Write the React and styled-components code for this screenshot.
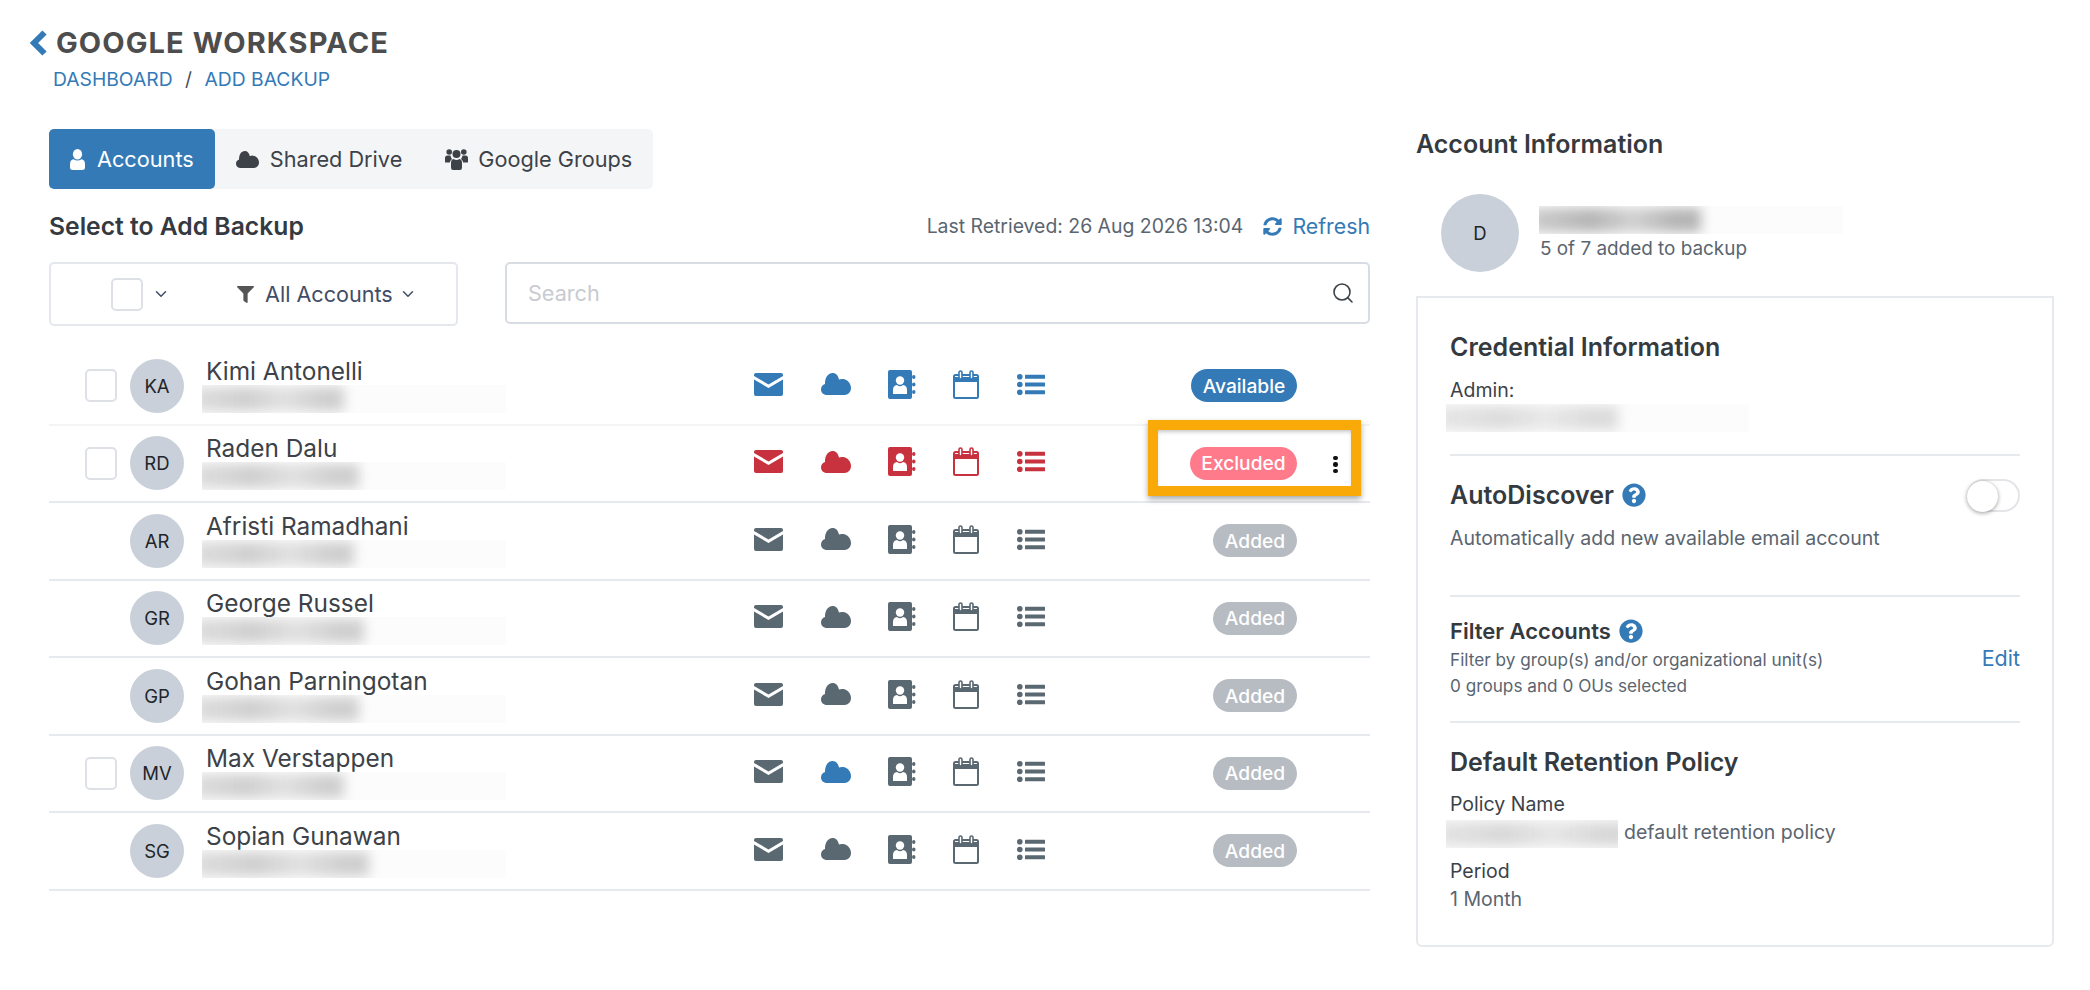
import React from "react";
import styled, { createGlobalStyle } from "styled-components";
import { FaFilter, FaQuestionCircle, FaSyncAlt } from "react-icons/fa";
import { ChevronDown, Search } from "lucide-react";

const BLUE = "#337ab7";
const RED = "#c8323e";
const GREY = "#5a6872";

const GlobalStyle = createGlobalStyle`
  html, body { margin: 0; padding: 0; background: #fff; }
  body { font-family: Inter, "Liberation Sans", sans-serif; color: #495057; }
  * { box-sizing: border-box; }
`;

const Page = styled.div`
  width: 2090px;
  height: 990px;
  padding: 26px 27px 0 29px;
  overflow: hidden;
`;

const TitleRow = styled.div`
  display: flex;
  align-items: center;
  height: 34px;
  gap: 9px;
  color: ${BLUE};
`;

const Title = styled.h1`
  margin: 0;
  font-size: 29px;
  line-height: 34px;
  font-weight: 700;
  letter-spacing: 1.1px;
  color: #4d4d4d;
`;

const Breadcrumb = styled.div`
  display: flex;
  gap: 12.5px;
  margin: 8px 0 0 24px;
  font-size: 19.3px;
  line-height: 22px;
  color: #495057;
`;

const Crumb = styled.a`
  color: ${BLUE};
`;

const Columns = styled.div`
  display: flex;
  gap: 46px;
  margin: 39px 0 0 20px;
`;

const Left = styled.div`
  width: 1321px;
`;

const Right = styled.div`
  width: 638px;
`;

const Tabs = styled.div`
  display: flex;
  width: 604px;
  height: 60px;
  background: #f4f5f7;
  border-radius: 5px;
`;

const Tab = styled.div`
  display: flex;
  flex: none;
  align-items: center;
  gap: ${(p) => p.$gap}px;
  height: 60px;
  padding: 0 ${(p) => p.$pad}px 0 21px;
  font-size: 21.7px;
  white-space: nowrap;
  border-radius: 5px;
  color: ${(p) => (p.$active ? "#fff" : "#3c4248")};
  background: ${(p) => (p.$active ? BLUE : "transparent")};
  svg { flex: none; }
`;

const SectionHead = styled.div`
  display: flex;
  align-items: center;
  justify-content: space-between;
  height: 30px;
  margin-top: 22px;
`;

const Heading = styled.h2`
  margin: 0;
  font-size: ${(p) => p.$size}px;
  line-height: 30px;
  font-weight: 600;
  color: #343a40;
`;

const Retrieved = styled.div`
  display: flex;
  align-items: center;
  font-size: 19.4px;
  color: #5a6570;
`;

const RefreshLink = styled.a`
  display: flex;
  align-items: center;
  gap: 10px;
  margin-left: 20px;
  font-size: 21.3px;
  color: ${BLUE};
`;

const ToolRow = styled.div`
  display: flex;
  gap: 47px;
  margin-top: 21px;
`;

const SelectBox = styled.div`
  display: flex;
  align-items: center;
  width: 409px;
  height: 64px;
  padding-left: 60px;
  border: 2px solid #e4e7ec;
  border-radius: 5px;
`;

const Check = styled.span`
  display: block;
  flex: none;
  width: 32px;
  height: 33px;
  border: 2px solid #dde1e6;
  border-radius: 5px;
  background: #fff;
`;

const CheckCaret = styled.span`
  display: flex;
  margin-left: 9px;
  color: #3f4d66;
`;

const FilterLabel = styled.div`
  display: flex;
  align-items: center;
  margin-left: 67px;
  font-size: 21.6px;
  color: #3f4d66;
  svg:first-child { margin-right: 11px; color: #555; }
  svg:last-child { margin-left: 6px; }
`;

const SearchBox = styled.div`
  display: flex;
  align-items: center;
  justify-content: space-between;
  width: 865px;
  height: 62px;
  padding: 0 13px 0 21px;
  border: 2px solid #d8dce3;
  border-radius: 5px;
  font-size: 21.6px;
  color: #c8cbd0;
  svg { color: #3c4248; }
`;

const Rows = styled.div`
  margin-top: 22px;
`;

const Row = styled.div`
  position: relative;
  display: flex;
  align-items: center;
  height: 77.5px;
  padding-left: 36px;
  border-bottom: 2px solid ${(p) => (p.$faint ? "#f3f4f5" : "#e6e9ee")};
`;

const CheckCell = styled.div`
  flex: none;
  width: 45px;
`;

const Avatar = styled.div`
  display: flex;
  flex: none;
  align-items: center;
  justify-content: center;
  width: ${(p) => p.$size}px;
  height: ${(p) => p.$size}px;
  border-radius: 50%;
  background: #c9d0da;
  color: #212529;
  font-size: 18.5px;
`;

const Info = styled.div`
  flex: none;
  width: 551px;
  margin-top: -2px;
  padding-left: 18px;
`;

const Name = styled.div`
  padding-left: 4px;
  font-size: 24.4px;
  line-height: 28px;
  color: #3c4248;
`;

const Redacted = styled.div`
  position: relative;
  flex: none;
  width: ${(p) => p.$w}px;
  height: 28px;
  overflow: hidden;
  background: #fcfcfc;
`;

const Smudge = styled.span`
  position: absolute;
  top: 2px;
  bottom: 2px;
  left: -8px;
  width: ${(p) => p.$w}px;
  background: linear-gradient(90deg, ${(p) => p.$c}aa, ${(p) => p.$c} 35%, ${(p) => p.$c}99 60%, ${(p) => p.$c} 85%);
  filter: blur(6px);
`;

const RowIcons = styled.div`
  display: flex;
  flex: none;
  margin-bottom: 3px;
  color: ${(p) => p.$color};
`;

const IconCell = styled.div`
  display: flex;
  align-items: center;
  justify-content: center;
  width: ${(p) => p.$w}px;
  height: 32px;
  color: ${(p) => p.$color || "inherit"};
`;

const StatusCell = styled.div`
  display: flex;
  flex: none;
  justify-content: flex-end;
  width: 232px;
`;

const Badge = styled.span`
  display: flex;
  align-items: center;
  justify-content: center;
  width: ${(p) => p.$w}px;
  height: 33px;
  border-radius: 17px;
  background: ${(p) => p.$bg};
  color: #fff;
  font-size: 19.2px;
  font-weight: 500;
`;

const Highlight = styled.div`
  position: absolute;
  left: 1099px;
  top: -6px;
  width: 213px;
  height: 76px;
  border: 10px solid #f9a908;
  box-shadow: 0 3px 6px rgba(0, 0, 0, 0.35), inset 0 3px 5px -2px rgba(0, 0, 0, 0.3);
`;

const Dots = styled.span`
  position: absolute;
  left: 1284px;
  top: 30px;
  display: flex;
  flex-direction: column;
  gap: 2px;
  i {
    display: block;
    width: 4.5px;
    height: 4.5px;
    border-radius: 50%;
    background: #111;
  }
`;

const Owner = styled.div`
  display: flex;
  align-items: center;
  gap: 20px;
  margin: 35px 0 0 25px;
`;

const OwnerSub = styled.div`
  margin-top: 3px;
  padding-left: 1px;
  font-size: 18.9px;
  line-height: 24px;
  color: #5a6570;
`;

const Card = styled.div`
  height: 651px;
  margin-top: 24px;
  padding: 34px 32px 0 32px;
  border: 2px solid #e6e9ee;
  border-radius: 0 0 6px 6px;
`;

const CardTitle = styled.h3`
  display: flex;
  align-items: center;
  gap: 8px;
  margin: ${(p) => p.$top || 0}px 0 0;
  font-size: ${(p) => p.$size || 25}px;
  line-height: ${(p) => p.$lh || 30}px;
  font-weight: 600;
  color: #343a40;
  svg { color: ${BLUE}; }
`;

const Label = styled.div`
  margin-top: ${(p) => p.$top}px;
  font-size: 19.5px;
  line-height: 24px;
  color: #3c4248;
`;

const Value = styled.div`
  display: flex;
  align-items: center;
  gap: ${(p) => p.$gap || 0}px;
  margin: ${(p) => p.$top}px 0 0 ${(p) => p.$left || 0}px;
  font-size: 19.5px;
  line-height: ${(p) => p.$lh || 24}px;
  color: #5a6570;
`;

const RaisedText = styled.span`
  margin-top: -4px;
`;

const Small = styled.div`
  font-size: 17.2px;
  line-height: 26px;
  color: #5a6570;
`;

const Divider = styled.hr`
  margin: ${(p) => p.$top}px 0 0;
  height: 2px;
  border: 0;
  background: #e6e9ee;
`;

const SpreadRow = styled.div`
  display: flex;
  align-items: center;
  justify-content: space-between;
  margin-top: ${(p) => p.$top}px;
`;

const Toggle = styled.div`
  width: 53px;
  height: 33px;
  border: 2px solid #e3e5e8;
  border-radius: 17px;
  background: #fff;
`;

const Knob = styled.span`
  display: block;
  width: 31px;
  height: 31px;
  margin-left: -2px;
  border-radius: 50%;
  background: #fff;
  box-shadow: 0 1px 4px rgba(0, 0, 0, 0.4);
`;

const EditLink = styled.a`
  margin-top: -30px;
  font-size: 21.5px;
  color: ${BLUE};
`;

const BackChevron = () => (
  <svg width="18" height="26" viewBox="0 0 18 26" fill="none" stroke="currentColor">
    <path d="M15.5 2.5L5 13l10.5 10.5" strokeWidth="6" />
  </svg>
);

const Cloud = ({ w = 30, h = 22 }) => (
  <svg width={w} height={h} viewBox="0 0 30 22" fill="currentColor">
    <path d="M6 22C2.5 22 0 19.5 0 16.5 0 13.8 1.6 11.8 4 11 3.8 5 6.8 0 11.5 0 15 0 17.2 2.6 18 6.6 19.2 6 20.5 5.8 22 6 26.5 6.3 30 10.5 30 15 30 19 27 22 23.5 22Z" />
  </svg>
);

const UserIcon = () => (
  <svg width="15" height="21" viewBox="0 0 15 21" fill="#fff">
    <ellipse cx="7.5" cy="5.2" rx="4.6" ry="5.2" />
    <path d="M0 18.5V15Q0 11 3.5 10.2Q7.5 13 11.5 10.2Q15 11 15 15V18.5Q15 21 12 21H3Q0 21 0 18.5Z" />
  </svg>
);

const GroupIcon = () => (
  <svg width="23" height="21" viewBox="0 0 23 21" fill="currentColor">
    <circle cx="4.2" cy="3" r="2.8" />
    <circle cx="18.8" cy="3" r="2.8" />
    <circle cx="11.5" cy="5" r="4" />
    <path d="M0 13V9Q0 6.5 2.5 6.5H5.5Q5.8 8.5 7 10Q5.2 11 4.8 13.5H1Q0 13.5 0 13Z" />
    <path d="M23 13V9Q23 6.5 20.5 6.5H17.5Q17.2 8.5 16 10Q17.8 11 18.2 13.5H22Q23 13.5 23 13Z" />
    <path d="M6 18.5V14Q6 10.5 8.5 10Q11.5 12 14.5 10Q17 10.5 17 14V18.5Q17 21 15 21H8Q6 21 6 18.5Z" />
  </svg>
);

const Mail = () => (
  <svg width="29" height="23" viewBox="0 0 29 23" fill="none">
    <path d="M2 0H27Q29 0 29 2V3L14.5 11.5 0 3V2Q0 0 2 0Z" fill="currentColor" />
    <path d="M0 6.5L14.5 15 29 6.5V21Q29 23 27 23H2Q0 23 0 21Z" fill="currentColor" />
  </svg>
);

const Book = () => (
  <svg width="28" height="29" viewBox="0 0 28 29">
    <path d="M2 0H22Q24 0 24 2V27Q24 29 22 29H2Q0 29 0 27V2Q0 0 2 0Z" fill="currentColor" />
    <rect x="24" y="5" width="3.5" height="4" rx="2" fill="currentColor" />
    <rect x="24" y="12.5" width="3.5" height="4" rx="2" fill="currentColor" />
    <rect x="24" y="20" width="3.5" height="4" rx="2" fill="currentColor" />
    <circle cx="12" cy="10.5" r="4.2" fill="#fff" />
    <path d="M5 24V20Q5 15.5 9 15Q12 17.5 15 15Q19 15.5 19 20V24Z" fill="#fff" />
  </svg>
);

const Calendar = () => (
  <svg width="26" height="29" viewBox="0 0 26 29" fill="none" stroke="currentColor">
    <rect x="1" y="5" width="24" height="23" rx="1.5" strokeWidth="2" />
    <path d="M1 9.5H25" strokeWidth="5" />
    <rect x="6" y="1" width="3" height="8" rx="1.5" fill="#fff" strokeWidth="1.6" />
    <rect x="17" y="1" width="3" height="8" rx="1.5" fill="#fff" strokeWidth="1.6" />
  </svg>
);

const ListIcon = () => (
  <svg width="28" height="21" viewBox="0 0 28 21" fill="currentColor">
    <circle cx="2.8" cy="2.8" r="2.8" />
    <circle cx="2.8" cy="10.5" r="2.8" />
    <circle cx="2.8" cy="18.2" r="2.8" />
    <rect x="8" y="0.8" width="20" height="4" rx="0.5" />
    <rect x="8" y="8.5" width="20" height="4" rx="0.5" />
    <rect x="8" y="16.2" width="20" height="4" rx="0.5" />
  </svg>
);

const Smudged = ({ w, fill, color = "#cfcfcf" }) => (
  <Redacted $w={w}>
    <Smudge $w={fill} $c={color} />
  </Redacted>
);

const accounts = [
  { initials: "KA", name: "Kimi Antonelli", check: true, status: "available", fill: 150, faint: true },
  { initials: "RD", name: "Raden Dalu", check: true, status: "excluded", fill: 165 },
  { initials: "AR", name: "Afristi Ramadhani", status: "added", fill: 160 },
  { initials: "GR", name: "George Russel", status: "added", fill: 170 },
  { initials: "GP", name: "Gohan Parningotan", status: "added", fill: 165 },
  { initials: "MV", name: "Max Verstappen", check: true, status: "added", fill: 150, cloudBlue: true },
  { initials: "SG", name: "Sopian Gunawan", status: "added", fill: 175 },
];

const badges = {
  available: { bg: BLUE, w: 106, text: "Available" },
  excluded: { bg: "#ff7a8a", w: 107, text: "Excluded" },
  added: { bg: "#b7bcc3", w: 84, text: "Added" },
};

const iconColor = { available: BLUE, excluded: RED, added: GREY };

const AccountRow = ({ account }) => {
  const badge = badges[account.status];
  return (
    <Row $faint={account.faint}>
      <CheckCell>{account.check && <Check />}</CheckCell>
      <Avatar $size={54}>{account.initials}</Avatar>
      <Info>
        <Name>{account.name}</Name>
        <Smudged w={304} fill={account.fill} />
      </Info>
      <RowIcons $color={iconColor[account.status]}>
        <IconCell $w={67}><Mail /></IconCell>
        <IconCell $w={67} $color={account.cloudBlue ? BLUE : undefined}><Cloud /></IconCell>
        <IconCell $w={66}><Book /></IconCell>
        <IconCell $w={62}><Calendar /></IconCell>
        <IconCell $w={68}><ListIcon /></IconCell>
      </RowIcons>
      <StatusCell>
        <Badge $bg={badge.bg} $w={badge.w}>{badge.text}</Badge>
      </StatusCell>
      {account.status === "excluded" && <Highlight />}
      {account.status === "excluded" && (
        <Dots><i /><i /><i /></Dots>
      )}
    </Row>
  );
};

export default function App() {
  return (
    <Page>
      <GlobalStyle />
      <TitleRow>
        <BackChevron />
        <Title>GOOGLE WORKSPACE</Title>
      </TitleRow>
      <Breadcrumb>
        <Crumb>DASHBOARD</Crumb>/<Crumb>ADD BACKUP</Crumb>
      </Breadcrumb>
      <Columns>
        <Left>
          <Tabs>
            <Tab $active $pad={21} $gap={12}><UserIcon />Accounts</Tab>
            <Tab $pad={22} $gap={11}><Cloud w={23} h={17} />Shared Drive</Tab>
            <Tab $pad={21} $gap={10}><GroupIcon />Google Groups</Tab>
          </Tabs>
          <SectionHead>
            <Heading $size={24.7}>Select to Add Backup</Heading>
            <Retrieved>
              Last Retrieved: 26 Aug 2026 13:04
              <RefreshLink><FaSyncAlt size={19} />Refresh</RefreshLink>
            </Retrieved>
          </SectionHead>
          <ToolRow>
            <SelectBox>
              <Check />
              <CheckCaret><ChevronDown size={18} /></CheckCaret>
              <FilterLabel>
                <FaFilter size={17} />
                All Accounts
                <ChevronDown size={18} />
              </FilterLabel>
            </SelectBox>
            <SearchBox>
              Search
              <Search size={24} strokeWidth={1.6} />
            </SearchBox>
          </ToolRow>
          <Rows>
            {accounts.map((account) => (
              <AccountRow key={account.initials} account={account} />
            ))}
          </Rows>
        </Left>
        <Right>
          <Heading $size={25}>Account Information</Heading>
          <Owner>
            <Avatar $size={78}>D</Avatar>
            <div>
              <Smudged w={304} fill={170} color="#b5b5b5" />
              <OwnerSub>5 of 7 added to backup</OwnerSub>
            </div>
          </Owner>
          <Card>
            <CardTitle>Credential Information</CardTitle>
            <Label $top={16}>Admin:</Label>
            <Value $top={2} $lh={28} $left={-4}>
              <Smudged w={303} fill={180} color="#dcdcdc" />
            </Value>
            <Divider $top={22} />
            <SpreadRow $top={22}>
              <CardTitle $lh={34}>AutoDiscover <FaQuestionCircle size={24} /></CardTitle>
              <Toggle><Knob /></Toggle>
            </SpreadRow>
            <Value $top={14}>Automatically add new available email account</Value>
            <Divider $top={45} />
            <CardTitle $top={21} $size={22} $lh={26}>Filter Accounts <FaQuestionCircle size={24} /></CardTitle>
            <SpreadRow $top={3}>
              <div>
                <Small>Filter by group(s) and/or organizational unit(s)</Small>
                <Small>0 groups and 0 OUs selected</Small>
              </div>
              <EditLink>Edit</EditLink>
            </SpreadRow>
            <Divider $top={22} />
            <CardTitle $top={24}>Default Retention Policy</CardTitle>
            <Label $top={15}>Policy Name</Label>
            <Value $top={4} $lh={28} $left={-4} $gap={6}>
              <Smudged w={172} fill={190} color="#d8d8d8" />
              <RaisedText>default retention policy</RaisedText>
            </Value>
            <Label $top={11}>Period</Label>
            <Value $top={4}>1 Month</Value>
          </Card>
        </Right>
      </Columns>
    </Page>
  );
}
